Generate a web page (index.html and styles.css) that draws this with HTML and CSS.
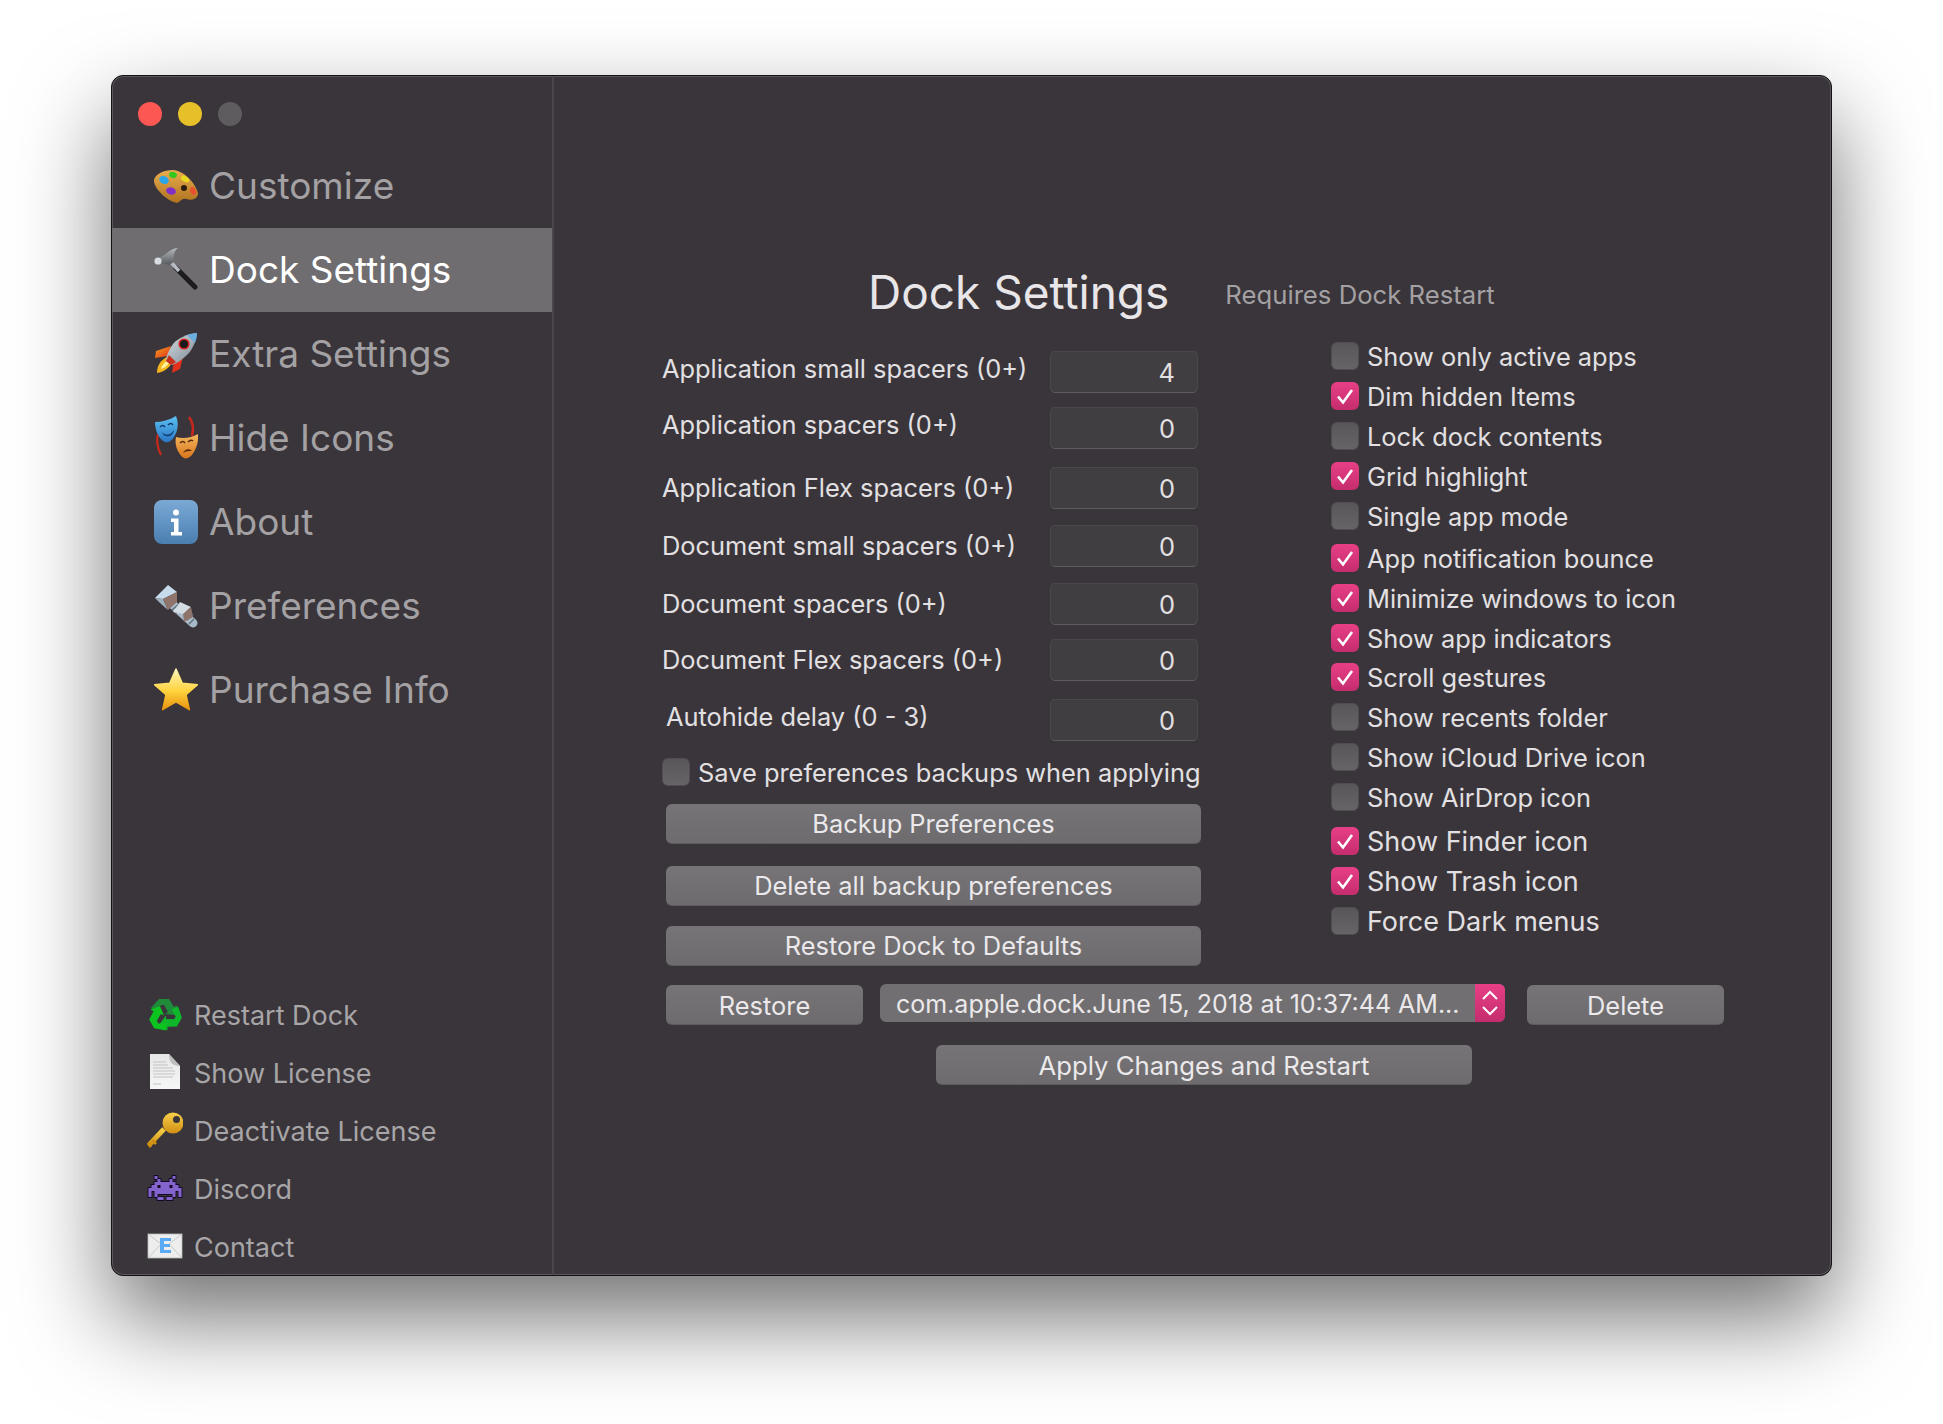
FILE: index.html
```html
<!DOCTYPE html>
<html lang="en">
<head>
  <meta charset="UTF-8" />
  <meta name="viewport" content="width=device-width, initial-scale=1.0" />
  <title>Dock Settings</title>
  <link rel="stylesheet" href="styles.css">
</head>
<body>
  <svg class="defs" width="0" height="0" aria-hidden="true">
    <defs>
      <linearGradient id="wood" x1="0" y1="0" x2="0" y2="1"><stop offset="0" stop-color="#e8ad4e"/><stop offset="1" stop-color="#b0721f"/></linearGradient>
      <linearGradient id="steel" x1="0" y1="0" x2="1" y2="1"><stop offset="0" stop-color="#d5dee6"/><stop offset="1" stop-color="#7c8791"/></linearGradient>
      <linearGradient id="head" x1="0" y1="0" x2="0" y2="1"><stop offset="0" stop-color="#b4b8bc"/><stop offset="1" stop-color="#55585c"/></linearGradient>
      <linearGradient id="fin" x1="0" y1="0" x2="1" y2="1"><stop offset="0" stop-color="#f2a11e"/><stop offset="1" stop-color="#e2301c"/></linearGradient>
      <linearGradient id="infoBg" x1="0" y1="0" x2="0" y2="1"><stop offset="0" stop-color="#7ba9d6"/><stop offset="1" stop-color="#4a7fb0"/></linearGradient>
      <linearGradient id="starFill" x1="0" y1="0" x2="0" y2="1"><stop offset="0" stop-color="#fff6b8"/><stop offset=".55" stop-color="#ffd23c"/><stop offset="1" stop-color="#e8920f"/></linearGradient>
      <linearGradient id="blueMask" x1="0" y1="0" x2="0" y2="1"><stop offset="0" stop-color="#5cc2f2"/><stop offset="1" stop-color="#2a76c4"/></linearGradient>
      <linearGradient id="orangeMask" x1="0" y1="0" x2="0" y2="1"><stop offset="0" stop-color="#f2b860"/><stop offset="1" stop-color="#d9761c"/></linearGradient>
      <linearGradient id="gold" x1="0" y1="0" x2="0" y2="1"><stop offset="0" stop-color="#f8d04a"/><stop offset="1" stop-color="#cf8e12"/></linearGradient>
      <linearGradient id="paper" x1="0" y1="0" x2="0" y2="1"><stop offset="0" stop-color="#e6e6e6"/><stop offset="1" stop-color="#f7f7f7"/></linearGradient>
    </defs>
  </svg>

  <div class="window">
    <aside class="sidebar">
      <div class="lights">
        <span class="light red"></span>
        <span class="light yellow"></span>
        <span class="light grey"></span>
      </div>

      <nav class="nav">
        <a class="nav-item">
          <svg class="nav-icon" viewBox="0 0 44 44">
            <path d="M0 16C1 10 10 6 19 6 30 7 41 18 44 29 44 35 38 37 32 35 28 34 26 38 23 39 14 38-1 24 0 16z" fill="url(#wood)"/>
            <ellipse cx="10" cy="16" rx="5" ry="3.800" fill="#2aa5e8" transform="rotate(25 10 16)"/>
            <ellipse cx="19" cy="11" rx="4" ry="3" fill="#34c81e" transform="rotate(15 19 11)"/>
            <ellipse cx="31" cy="15" rx="4.500" ry="2.600" fill="#e8d820" transform="rotate(30 31 15)"/>
            <ellipse cx="17" cy="27" rx="5" ry="3.600" fill="#8030c8" transform="rotate(15 17 27)"/>
            <ellipse cx="39" cy="27" rx="2.800" ry="4" fill="#e85030" transform="rotate(-20 39 27)"/>
            <circle cx="30" cy="24" r="3" fill="#2a1c10"/>
          </svg>
          <span>Customize</span>
        </a>
        <a class="nav-item active">
          <svg class="nav-icon" viewBox="0 0 44 44">
            <path d="M22 20L41 39" stroke="#1c1c1e" stroke-width="5" stroke-linecap="round"/>
            <path d="M15 12L25 23" stroke="#b6bcc2" stroke-width="3.500"/>
            <path d="M4 11L13 5C16 2 20 0 24 0 20 3 19 8 20 14L15 17 8 15z" fill="url(#head)"/>
            <circle cx="4" cy="13" r="3.600" fill="#d8dce0"/>
          </svg>
          <span>Dock Settings</span>
        </a>
        <a class="nav-item">
          <svg class="nav-icon" viewBox="0 0 44 44">
            <path d="M17 14L2 19 1 26 14 24z" fill="url(#fin)"/>
            <path d="M29 25L26 37 18 41 20 29z" fill="#e2301c"/>
            <path d="M3 41C3 33 7 28 13 25L18 31C15 36 10 40 3 41z" fill="#f7b51c"/>
            <path d="M7 37C8 33 10 31 13 29l2 2C13 34 11 36 7 37z" fill="#fff3a0"/>
            <path d="M43 1C33 2 24 6 19 12 15 18 12 24 12 29L17 33C22 32 28 28 33 23 39 17 42 9 43 1z" fill="url(#steel)"/>
            <path d="M43 1C39 1 36 2 33 3L41 11C42 8 43 5 43 1z" fill="#6cacdf"/>
            <circle cx="30" cy="12" r="4.800" fill="#1a1a1e" stroke="#d8241c" stroke-width="1.600"/>
            <path d="M12 29L17 33 22 30 15 23z" fill="#c8301c"/>
          </svg>
          <span>Extra Settings</span>
        </a>
        <a class="nav-item">
          <svg class="nav-icon" viewBox="0 0 44 44">
            <path d="M4 18C2 25 4 33 7 39" stroke="#c8281c" stroke-width="2.200" fill="none"/>
            <path d="M35 1C39 6 40 12 38 20" stroke="#c8281c" stroke-width="2.600" fill="none"/>
            <path d="M1 6C8 6 15 4 22 0 25 7 24 15 20 21 18 25 14 27 11 26 5 23 1 15 1 6z" fill="url(#blueMask)"/>
            <path d="M6 11q3-3 5 0M14 9q3-3 5 0" stroke="#123a6e" stroke-width="1.500" fill="none"/>
            <path d="M8 16c3 4 8 4 12-2-1 7-10 9-12 2z" fill="#123a6e"/>
            <path d="M22 21C29 23 37 22 44 18 45 26 42 34 38 39 35 42 32 43 30 42 25 39 20 30 22 21z" fill="url(#orangeMask)"/>
            <path d="M26 27q3-3 5 0M34 26q3-3 5-1" stroke="#5a2a08" stroke-width="1.500" fill="none"/>
            <path d="M29 37c2-4 6-5 9-2-3 0-6 0-9 2z" fill="#5a2a08"/>
          </svg>
          <span>Hide Icons</span>
        </a>
        <a class="nav-item">
          <svg class="nav-icon" viewBox="0 0 44 44">
            <rect width="44" height="44" rx="8" fill="url(#infoBg)"/>
            <circle cx="22" cy="12.500" r="3" fill="#fff"/>
            <path d="M17 18.500h7.500V32H28v3.500H17V32h3V22h-3z" fill="#fff"/>
          </svg>
          <span>About</span>
        </a>
        <a class="nav-item">
          <svg class="nav-icon" viewBox="0 0 44 44">
            <path d="M18 20L39 39" stroke="#a8bac8" stroke-width="9" stroke-linecap="round"/>
            <path d="M18 26l7-6M22 29l6-6M33 36l6-6M35 40l5-5" stroke="#5f6c76" stroke-width="1.300"/>
            <path d="M1 14L14 1 23 8 9 15z" fill="#c6dcec"/>
            <path d="M1 14L9 15 14 26 6 19z" fill="#9fb0bc"/>
            <path d="M9 15L23 8 23 18 14 26z" fill="#8f746c"/>
            <path d="M19 28L26 18 37 23 29 30z" fill="#d2dce2"/>
            <path d="M29 30L37 23 39 33 30 38z" fill="#8f746c"/>
          </svg>
          <span>Preferences</span>
        </a>
        <a class="nav-item">
          <svg class="nav-icon" viewBox="0 0 44 44">
            <path d="M22 1l6.300 14.200 15.200 1.500-11.500 10 3.400 15-13.400-7.900-13.400 7.900 3.400-15L.5 16.700l15.200-1.500z" fill="url(#starFill)" stroke="url(#starFill)" stroke-linejoin="round" stroke-width="1.500"/>
          </svg>
          <span>Purchase Info</span>
        </a>
      </nav>

      <ul class="links">
        <li class="link">
          <svg class="link-icon" viewBox="0 0 36 36">
            <path d="M12 3h10l5 8 3-2-2 10-10-1 3-2-4-7-3 0-4 7-6-4z" fill="#1f8a3a"/>
            <path d="M12 3h10l5 8 3-2-2 10-10-1 3-2-4-7-3 0-4 7-6-4z" fill="#0fb82a" transform="rotate(120 18 19)"/>
            <path d="M12 3h10l5 8 3-2-2 10-10-1 3-2-4-7-3 0-4 7-6-4z" fill="#0cc41f" transform="rotate(240 18 19)"/>
          </svg>
          <span>Restart Dock</span>
        </li>
        <li class="link">
          <svg class="link-icon" viewBox="0 0 36 36">
            <path d="M3 0h19l11 12v23H3z" fill="url(#paper)"/>
            <path d="M22 0c0 7 2 12 11 12z" fill="#bdbdbd"/>
            <path d="M6 8h13M6 11h15M6 14h20M6 17h22M6 20h22M6 23h20M6 30h8" stroke="#c4c4c4" stroke-width="1.200"/>
          </svg>
          <span>Show License</span>
        </li>
        <li class="link">
          <svg class="link-icon" viewBox="0 0 36 36">
            <path d="M17 17L2 33" stroke="url(#gold)" stroke-width="5"/>
            <path d="M5 28l4 4M1 31l3 4" stroke="#cf8e12" stroke-width="3"/>
            <circle cx="26" cy="11" r="10.500" fill="url(#gold)"/>
            <circle cx="29.500" cy="7.500" r="3.500" fill="#3a353a"/>
          </svg>
          <span>Deactivate License</span>
        </li>
        <li class="link">
          <svg class="link-icon" viewBox="0 0 36 36">
            <path d="M7.500 6h3v3h-3zM25.500 6h3v3h-3zM10.500 9h3v3h-3zM22.500 9h3v3h-3zM7.500 12h21v3h-21zM4.500 15h27v3h-27zM1.500 18h33v3h-33zM1.500 21h3v3h-3zM7.500 21h21v3h-21zM31.500 21h3v3h-3zM1.500 24h3v3h-3zM7.500 24h3v3h-3zM25.500 24h3v3h-3zM31.500 24h3v3h-3zM10.500 27h6v3h-6zM19.500 27h6v3h-6z" fill="#8364cc" stroke="#140a28" stroke-width="1.800" paint-order="stroke"/>
            <path d="M10.500 15h3v3h-3zM22.500 15h3v3h-3z" fill="#140a28"/>
          </svg>
          <span>Discord</span>
        </li>
        <li class="link">
          <svg class="link-icon" viewBox="0 0 36 36">
            <rect x="1" y="6" width="34" height="24" fill="#ededed" stroke="#b9b9b9" stroke-width=".8"/>
            <path d="M1 6l17 13L35 6M1 30l12-13M35 30L23 17" stroke="#c9c9c9" stroke-width="1" fill="none"/>
            <path d="M13 10h11v3h-7v3h6v3h-6v3h7v3H13z" fill="#5aa9f5"/>
          </svg>
          <span>Contact</span>
        </li>
      </ul>
    </aside>

    <main class="content">
      <header class="heading">
        <h1>Dock Settings</h1>
        <span class="note">Requires Dock Restart</span>
      </header>

      <div class="columns">
        <section class="col-left">
          <div class="field"><label class="raised">Application small spacers (0+)</label><div class="num">4</div></div>
          <div class="field gap-s"><label class="raised">Application spacers (0+)</label><div class="num">0</div></div>
          <div class="field gap-l"><label>Application Flex spacers (0+)</label><div class="num">0</div></div>
          <div class="field gap-m"><label>Document small spacers (0+)</label><div class="num">0</div></div>
          <div class="field gap-m"><label>Document spacers (0+)</label><div class="num">0</div></div>
          <div class="field gap-s"><label>Document Flex spacers (0+)</label><div class="num">0</div></div>
          <div class="field gap-l"><label class="raised indented">Autohide delay (0 - 3)</label><div class="num">0</div></div>

          <div class="check save"><span class="box"></span><span class="check-text">Save preferences backups when applying</span></div>

          <button class="btn wide first">Backup Preferences</button>
          <button class="btn wide">Delete all backup preferences</button>
          <button class="btn wide third">Restore Dock to Defaults</button>
        </section>

        <section class="col-right">
          <div class="check"><span class="box"></span><span class="check-text">Show only active apps</span></div>
          <div class="check on"><span class="box"><svg viewBox="0 0 28 28"><path d="M7 14.500l5 6L21 8" /></svg></span><span class="check-text">Dim hidden Items</span></div>
          <div class="check"><span class="box"></span><span class="check-text">Lock dock contents</span></div>
          <div class="check on"><span class="box"><svg viewBox="0 0 28 28"><path d="M7 14.500l5 6L21 8" /></svg></span><span class="check-text">Grid highlight</span></div>
          <div class="check"><span class="box"></span><span class="check-text">Single app mode</span></div>
          <div class="check on wider"><span class="box"><svg viewBox="0 0 28 28"><path d="M7 14.500l5 6L21 8" /></svg></span><span class="check-text">App notification bounce</span></div>
          <div class="check on"><span class="box"><svg viewBox="0 0 28 28"><path d="M7 14.500l5 6L21 8" /></svg></span><span class="check-text">Minimize windows to icon</span></div>
          <div class="check on tight"><span class="box"><svg viewBox="0 0 28 28"><path d="M7 14.500l5 6L21 8" /></svg></span><span class="check-text">Show app indicators</span></div>
          <div class="check on"><span class="box"><svg viewBox="0 0 28 28"><path d="M7 14.500l5 6L21 8" /></svg></span><span class="check-text">Scroll gestures</span></div>
          <div class="check"><span class="box"></span><span class="check-text">Show recents folder</span></div>
          <div class="check"><span class="box"></span><span class="check-text">Show iCloud Drive icon</span></div>
          <div class="check"><span class="box"></span><span class="check-text">Show AirDrop icon</span></div>
          <div class="check on widest large"><span class="box"><svg viewBox="0 0 28 28"><path d="M7 14.500l5 6L21 8" /></svg></span><span class="check-text">Show Finder icon</span></div>
          <div class="check on large"><span class="box"><svg viewBox="0 0 28 28"><path d="M7 14.500l5 6L21 8" /></svg></span><span class="check-text">Show Trash icon</span></div>
          <div class="check large"><span class="box"></span><span class="check-text">Force Dark menus</span></div>
        </section>
      </div>

      <div class="restore-row">
        <button class="btn small">Restore</button>
        <div class="popup">
          <span class="popup-text">com.apple.dock.June 15, 2018 at 10:37:44 AM...</span>
          <span class="stepper"><svg viewBox="0 0 30 38"><path d="M8 15l7-7 7 7M8 23l7 7 7-7"/></svg></span>
        </div>
        <button class="btn small">Delete</button>
      </div>

      <button class="btn apply">Apply Changes and Restart</button>
    </main>
  </div>
</body>
</html>
```

FILE: styles.css
```css
* {
  box-sizing: border-box;
}

html, body {
  margin: 0;
  background: #fff;
}

body {
  width: 1943px;
  height: 1424px;
  padding: 75px 111px 0;
  overflow: hidden;
  font-family: 'Inter', 'Liberation Sans', sans-serif;
}

.defs {
  display: block;
  height: 0;
}

.window {
  display: flex;
  width: 1721px;
  height: 1201px;
  background: #3a353a;
  border: 1px solid #141214;
  border-radius: 12px;
  box-shadow: inset 0 0 0 1px #5a575a, 0 42px 92px rgba(0,0,0,0.56);
  overflow: hidden;
}

/* sidebar */
.sidebar {
  display: flex;
  flex-direction: column;
  flex: none;
  width: 442px;
  border-right: 2px solid #4a474a;
}

.lights {
  display: flex;
  gap: 16px;
  height: 68px;
  padding: 26px 0 0 26px;
}

.light {
  width: 24px;
  height: 24px;
  border-radius: 50%;
}

.red { background: #fc5753; }
.yellow { background: #e6c029; }
.grey { background: #5f5c5f; }

.nav-item {
  display: flex;
  align-items: center;
  gap: 11px;
  height: 84px;
  padding-left: 42px;
  font-size: 37px;
  color: #a3a1a3;
}

.nav-item span {
  margin-bottom: 2px;
}

.nav-item.active {
  background: #6f6d6f;
  color: #fff;
}

.nav-icon {
  flex: none;
  width: 44px;
  height: 44px;
}

.links {
  list-style: none;
  margin: auto 0 0;
  padding: 0;
}

.link {
  display: flex;
  align-items: center;
  gap: 11px;
  height: 58px;
  padding-left: 35px;
  font-size: 27px;
  color: #a7a5a7;
}

.link span {
  margin-top: 2px;
}

.link-icon {
  flex: none;
  width: 36px;
  height: 36px;
}

/* main panel */
.content {
  flex: 1;
  padding: 188px 0 0 108px;
  color: #e2e0e2;
  font-size: 25.4px;
}

.heading {
  display: flex;
  align-items: center;
  gap: 56px;
  height: 58px;
  margin: 0 0 20px 206px;
}

.heading h1 {
  margin: 0 0 2px;
  font-size: 46px;
  font-weight: 400;
  color: #e8e6e8;
}

.note {
  margin-top: 2px;
  font-size: 25.7px;
  color: #a3a1a3;
}

.columns {
  display: flex;
  gap: 130px;
}

.col-left {
  width: 539px;
  padding-top: 9px;
}

.field {
  display: flex;
  align-items: center;
  justify-content: space-between;
  height: 42px;
  padding-right: 3px;
}

.field label {
  padding-bottom: 2px;
}

.gap-s { margin-top: 14px; }
.gap-m { margin-top: 16px; }
.gap-l { margin-top: 18px; }

.raised {
  margin-bottom: 6px;
}

.indented {
  margin-left: 4px;
}

.num {
  width: 148px;
  height: 42px;
  padding-right: 22px;
  line-height: 42px;
  text-align: right;
  background: #413e41;
  border: 1px solid #4b484b;
  border-bottom-color: #5e5c5e;
  border-radius: 5px;
}

.check {
  display: flex;
  align-items: center;
  gap: 8px;
  height: 28px;
  margin-bottom: 12px;
  white-space: nowrap;
}

.check-text {
  margin-top: 1px;
}

.check.wider { margin-top: 14px; }
.check.widest { margin-top: 16px; }
.check.tight { margin-bottom: 11px; }
.check.large { font-size: 27px; }

.box {
  flex: none;
  width: 28px;
  height: 28px;
  background: linear-gradient(#585658, #666466);
  border: 1px solid #4f4d4f;
  border-radius: 6px;
}

.on .box {
  background: linear-gradient(#e83f87, #c42d6d);
  border: none;
}

.box svg {
  display: block;
  width: 28px;
  height: 28px;
}

.box path {
  fill: none;
  stroke: #fff;
  stroke-width: 2.6;
}

.save {
  margin: 17px 0 18px;
}

.btn {
  display: block;
  height: 40px;
  padding: 0;
  font: inherit;
  color: #ebe9eb;
  background: linear-gradient(#767476, #6d6b6d);
  border: none;
  border-bottom: 1px solid #5e5c5e;
  border-radius: 6px;
}

.wide {
  width: 535px;
  margin: 0 0 22px 4px;
}

.third {
  margin-top: -2px;
  margin-bottom: 0;
}

.restore-row {
  display: flex;
  align-items: flex-start;
  margin: 19px 0 0 4px;
}

.small {
  width: 197px;
  padding-top: 2px;
}

.popup {
  display: flex;
  justify-content: space-between;
  width: 625px;
  height: 38px;
  margin: -1px 22px 0 17px;
  font-size: 25px;
  line-height: 40px;
  color: #ebe9eb;
  background: #716f71;
  border-radius: 6px;
  overflow: hidden;
}

.popup-text {
  padding-left: 16px;
  white-space: nowrap;
}

.stepper {
  flex: none;
  width: 30px;
  height: 38px;
  background: linear-gradient(#e83f87, #c42d6d);
}

.stepper svg {
  display: block;
  width: 30px;
  height: 38px;
}

.stepper path {
  fill: none;
  stroke: #fff;
  stroke-width: 2;
}

.apply {
  width: 536px;
  margin: 20px 0 0 274px;
  padding-top: 2px;
  font-size: 25.7px;
}
```
